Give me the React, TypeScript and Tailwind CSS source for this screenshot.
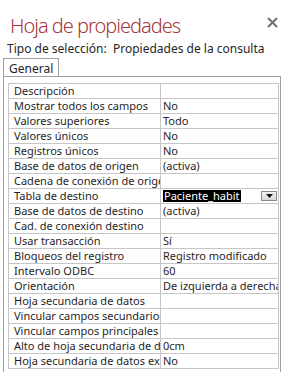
import React from 'react';

interface PropRow {
  label: string;
  value?: string;
  selected?: boolean;
}

const rows: PropRow[] = [
  { label: 'Descripción' },
  { label: 'Mostrar todos los campos', value: 'No' },
  { label: 'Valores superiores', value: 'Todo' },
  { label: 'Valores únicos', value: 'No' },
  { label: 'Registros únicos', value: 'No' },
  { label: 'Base de datos de origen', value: '(activa)' },
  { label: 'Cadena de conexión de origen' },
  { label: 'Tabla de destino', value: 'Paciente_habit', selected: true },
  { label: 'Base de datos de destino', value: '(activa)' },
  { label: 'Cad. de conexión destino' },
  { label: 'Usar transacción', value: 'Sí' },
  { label: 'Bloqueos del registro', value: 'Registro modificado' },
  { label: 'Intervalo ODBC', value: '60' },
  { label: 'Orientación', value: 'De izquierda a derecha' },
  { label: 'Hoja secundaria de datos' },
  { label: 'Vincular campos secundarios' },
  { label: 'Vincular campos principales' },
  { label: 'Alto de hoja secundaria de datos', value: '0cm' },
  { label: 'Hoja secundaria de datos expandida', value: 'No' },
];

const font = { fontFamily: '"Noto Sans", "Open Sans", sans-serif' };

const Row: React.FC<{ row: PropRow }> = ({ row }) => (
  <div className="flex h-[15px] border-b border-[#c6c6c6] text-[11px] leading-[14px] text-[#1f1f1f]">
    <div className="w-[152px] shrink-0 overflow-hidden whitespace-nowrap border-r border-[#c6c6c6] pl-[5px]">
      {row.label}
    </div>
    <div className="flex min-w-0 flex-1 items-center overflow-hidden whitespace-nowrap pl-[2px]">
      {row.selected ? (
        <>
          <span className="bg-black px-[1px] leading-[12px] text-white">{row.value}</span>
          <div className="ml-auto mr-[1px] flex h-[10px] w-[16px] items-end justify-center border border-[#8a8a8a] bg-gradient-to-b from-[#f4f4f4] to-[#d8d8d8] pb-[2px]">
            <svg width="7" height="4" viewBox="0 0 7 4">
              <path d="M0 0h7L3.5 4z" fill="#111" />
            </svg>
          </div>
        </>
      ) : (
        row.value
      )}
    </div>
  </div>
);

export default function App() {
  return (
    <div className="h-[372px] w-[287px] overflow-hidden bg-white" style={font}>
      <div className="flex h-[41px] items-start justify-between pl-[10px] pr-[9px] pt-[13px]">
        <h1 className="text-[20px] font-light leading-[26px] tracking-[-1px] text-[#a4373a]">
          Hoja de propiedades
        </h1>
        <svg className="mt-[4px]" width="11" height="11" viewBox="0 0 11 11">
          <path d="M1 1l9 9M10 1l-9 9" stroke="#707070" strokeWidth="2" />
        </svg>
      </div>
      <div className="pl-[7px] text-[12px] leading-[15px] text-[#262626]">
        Tipo de selección:&nbsp; Propiedades de la consulta
      </div>
      <div className="ml-[3px] mt-[2px] flex">
        <div className="border-l border-r border-t border-[#a0a0a0] px-[5px] pt-[2px] text-[12px] leading-[15px] text-[#262626]">
          General
        </div>
      </div>
      <div className="ml-[3px] h-[400px] w-[278px] border-l border-r border-t border-[#a0a0a0] pl-[4px] pr-[1px] pt-[6px]">
        <div className="border-l border-r border-t border-[#c6c6c6]">
          {rows.map((r) => (
            <Row key={r.label} row={r} />
          ))}
        </div>
      </div>
    </div>
  );
}
